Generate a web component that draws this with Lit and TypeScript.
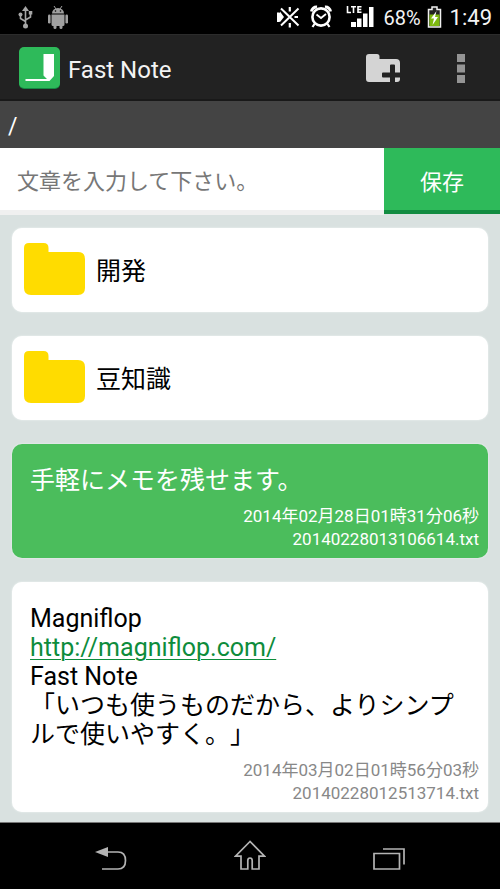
import { LitElement, html, svg, css } from "lit";
import { customElement, state } from "lit/decorators.js";

interface Note {
  lines: string[];
  saved: string;
  file: string;
  highlighted?: boolean;
}

const FOLDERS = ["開発", "豆知識"];

const NOTES: Note[] = [
  {
    lines: ["手軽にメモを残せます。"],
    saved: "2014年02月28日01時31分06秒",
    file: "20140228013106614.txt",
    highlighted: true,
  },
  {
    lines: [
      "Magniflop",
      "http://magniflop.com/",
      "Fast Note",
      "「いつも使うものだから、よりシンプルで使いやすく。」",
    ],
    saved: "2014年03月02日01時56分03秒",
    file: "20140228012513714.txt",
  },
];

@customElement("status-bar")
class StatusBar extends LitElement {
  static styles = css`
    :host {
      display: flex;
      align-items: center;
      height: 34px;
      padding: 0 8px 0 17px;
      background: #000;
      color: #f4f4f4;
    }
    svg {
      display: block;
      flex: none;
    }
    .left,
    .right {
      display: flex;
      align-items: center;
    }
    .left {
      gap: 14px;
      flex: 1;
    }
    .right {
      gap: 6px;
    }
    .alarm {
      margin: 0 8px 0 4px;
    }
    .percent {
      font-size: 20px;
      line-height: 24px;
      padding-top: 2px;
      margin-left: 2px;
    }
    .clock {
      font-size: 22px;
      line-height: 24px;
      padding-top: 2px;
      margin-left: 2px;
    }
  `;

  render() {
    return html`
      <div class="left">
        <svg width="16" height="24" viewBox="0 0 16 24" fill="none" stroke="#a6a6a6" stroke-width="2">
          <path d="M8.5 3v18M3.500 10v3.500l5 3M13.500 8v4l-5 3" stroke-width="1.600" />
          <path d="M8.500 1l3.500 5h-7z" fill="#a6a6a6" stroke="none" />
          <circle cx="8.500" cy="21" r="2.500" fill="#a6a6a6" stroke="none" />
          <circle cx="3.500" cy="9.500" r="2" fill="#a6a6a6" stroke="none" />
          <path d="M11.800 6h3.500v3.500h-3.500z" fill="#a6a6a6" stroke="none" />
        </svg>
        <svg width="22" height="24" viewBox="0 0 22 24" fill="#a0a0a0">
          <path d="M5 8.500a6 5.500 0 0 1 12 0zM4.500 9.500h13v10q0 1.500-1.500 1.500h-10q-1.500 0-1.500-1.500z" />
          <rect x="1" y="9.500" width="2.600" height="9" rx="1.300" />
          <rect x="18.400" y="9.500" width="2.600" height="9" rx="1.300" />
          <rect x="6.500" y="18" width="3" height="6" rx="1.500" />
          <rect x="12.500" y="18" width="3" height="6" rx="1.500" />
          <path d="M7 1l2 3M15 1l-2 3" stroke="#a0a0a0" />
          <circle cx="8.500" cy="6" r=".8" fill="#000" />
          <circle cx="13.500" cy="6" r=".8" fill="#000" />
        </svg>
      </div>
      <div class="right">
        <svg width="24" height="22" viewBox="0 0 24 22" fill="#fff">
          <path d="M1 6.500h2.500L8 11l-4.500 5H1zM4 5.500l4 5.500-4 5z" />
          <path d="M5 2.500L22.500 19.500M22.500 2.500L5 19.500" stroke="#fff" stroke-width="2" />
          <path d="M13.800 1v4.500M13.800 17v4.500M18.500 11h3.500" stroke="#fff" stroke-width="2.200" />
        </svg>
        <svg class="alarm" width="22" height="24" viewBox="0 0 22 24" fill="none" stroke="#fff">
          <circle cx="11" cy="12" r="8.600" stroke-width="2.600" />
          <path d="M1.500 6.500A5 5 0 0 1 7 2M20.500 6.500A5 5 0 0 0 15 2" stroke-width="3" />
          <path d="M6.500 9.500L11 13l5-4" stroke-width="1.800" />
          <path d="M4.500 19l-2 3M17.500 19l2 3" stroke-width="2.200" />
        </svg>
        <svg width="29" height="24" viewBox="0 0 29 24" fill="#fff">
          <path d="M5 17h5v5H5zM11 13.500h4.500V22H11zM17 8.500h4.500V22H17zM23 2h4.500v20H23z" />
          <path d="M1.500 1v6.500h3.500M5 1.800h5M7.500 1.800V8M15.500 1.800h-3.500v5.500h3.500M12 4.500h3.300" fill="none" stroke="#fff" stroke-width="1.600" />
        </svg>
        <span class="percent">68%</span>
        <svg width="15" height="24" viewBox="0 0 15 24">
          <path d="M5 2h5v2.500h3.500v17.500h-12V4.500H5z" fill="#222" stroke="#f0f0f0" stroke-width="1.500" />
          <path d="M2.500 9.500h10V21h-10z" fill="#7db80f" />
          <path d="M9.500 6L4 13.500h3L5.500 20 11 12H8z" fill="#fff" />
        </svg>
        <span class="clock">1:49</span>
      </div>
    `;
  }
}

@customElement("note-card")
class NoteCard extends LitElement {
  static properties = { note: { attribute: false } };
  declare note: Note;

  static styles = css`
    :host {
      display: block;
    }
    .card {
      padding: 22px 9px 7px 18px;
      border-radius: 10px;
      background: #fff;
      box-shadow: 0 0 2px #f4f8f7;
      color: #000;
    }
    .highlighted {
      background: #4bbd5c;
      color: #fff;
    }
    p {
      margin: 0;
      padding-right: 9px;
      font-size: 25px;
      line-height: 29px;
      text-spacing-trim: space-all;
    }
    a {
      color: #0d8c3c;
      text-decoration-thickness: 1px;
      text-underline-offset: 3px;
    }
    .meta {
      margin-top: 10px;
      font-size: 17px;
      line-height: 23px;
      text-align: right;
      color: #888;
    }
    .highlighted .meta {
      color: #fff;
    }
  `;

  render() {
    const { lines, saved, file, highlighted } = this.note;
    return html`
      <article class="card ${highlighted ? "highlighted" : ""}">
        ${lines.map(
          (line) =>
            html`<p>${line.startsWith("http") ? html`<a href=${line}>${line}</a>` : line}</p>`
        )}
        <div class="meta">
          <div>${saved}</div>
          <div>${file}</div>
        </div>
      </article>
    `;
  }
}

@customElement("app-root")
class AppRoot extends LitElement {
  @state() private draft = "";

  static styles = css`
    :host {
      display: flex;
      flex-direction: column;
      min-height: 100vh;
      background: #d9e1e0;
      font-family: Roboto, "Noto Sans CJK JP", sans-serif;
    }
    * {
      box-sizing: border-box;
    }
    svg {
      display: block;
      flex: none;
    }
    button {
      margin: 0;
      padding: 0;
      border: 0;
      background: none;
      font: inherit;
      color: inherit;
    }
    .bar {
      display: flex;
      align-items: center;
      height: 67px;
      padding: 2px 20px 0 19px;
      background: #222;
      border-top: 1px solid #2c2c2c;
      border-bottom: 2px solid #191919;
      color: #f3f3f3;
    }
    h1 {
      flex: 1;
      margin: 0 0 0 8px;
      padding-top: 3px;
      font-size: 24px;
      line-height: 30px;
      font-weight: 400;
    }
    .action {
      display: grid;
      place-items: center;
      width: 38px;
      height: 48px;
    }
    .action + .action {
      margin-left: 40px;
    }
    .path {
      height: 47px;
      padding: 0 8px;
      background: #444;
      color: #fff;
      font-size: 23px;
      line-height: 52px;
    }
    form {
      display: grid;
      grid-template-columns: minmax(0, 1fr) 116px;
      height: 67px;
      font-size: 22px;
    }
    input {
      min-width: 0;
      border: 0;
      border-bottom: 5px solid #f0f0f0;
      border-radius: 0;
      padding: 4px 17px 0;
      outline: 0;
      background: #fff;
      font: inherit;
      color: #000;
    }
    input::placeholder {
      color: #777;
      opacity: 1;
    }
    .save {
      padding-top: 2px;
      border-bottom: 4px solid #128c41;
      margin-bottom: 1px;
      background: #2eba5a;
      color: #fff;
    }
    .list {
      flex: 1;
      display: flex;
      flex-direction: column;
      gap: 24px;
      margin: 0;
      padding: 13px 12px 10px;
      list-style: none;
    }
    .folder {
      display: flex;
      align-items: center;
      gap: 11px;
      width: 100%;
      height: 84px;
      padding: 0 12px 2px;
      border-radius: 10px;
      background: #fff;
      box-shadow: 0 0 2px #f4f8f7;
      font-size: 25px;
      color: #000;
      text-align: left;
    }
    nav {
      display: grid;
      grid-template-columns: repeat(3, 1fr);
      height: 67px;
      padding: 0 42px;
      background: #000;
      border-top: 1px solid #777;
    }
    nav button {
      display: grid;
      place-items: center;
    }
  `;

  private navIcons = [
    {
      label: "戻る",
      art: svg`<path d="M10 12h13q7.500 0 7.500 8.500T23 29H7" /><path d="M0 12l13-5v10z" fill="#b4b4b4" stroke="none" />`,
    },
    {
      label: "ホーム",
      art: svg`<path d="M16 1.500L1.500 16.200H7V29h6.800v-8.500q0-2.500 2.200-2.500t2.200 2.500V29H25V16.200h5.500z" />`,
    },
    {
      label: "最近使ったアプリ",
      art: svg`<path d="M1 13.500h25.500V29H1zM10 9h21v15.500" />`,
    },
  ];

  render() {
    return html`
      <status-bar></status-bar>
      <header class="bar">
        <svg width="41" height="42" viewBox="0 0 41 42">
          <rect y="1" width="41" height="41" rx="5" fill="#158a43" />
          <rect width="41" height="41" rx="5" fill="#2eba5a" />
          <path d="M24.500 7H35v22l-4.500 5H6.500v-2H28l-3.500-3.500z" fill="#fff" />
        </svg>
        <h1>Fast Note</h1>
        <button class="action" aria-label="フォルダを作成">
          <svg width="36" height="30" viewBox="0 0 36 30">
            <path d="M4 1h8q2.500 0 2.500 2.500V6H31q4 0 4 4v16q0 3-3 3H4q-3 0-3-3V4q0-3 3-3z" fill="#d4d4d4" />
            <path d="M25 17.500v-5q0-1 1-1h3q1 0 1 1v7h5v5h-5v5h-5v-5h-7q-1 0-1-1v-3q0-1 1-1h7z" fill="#222" />
          </svg>
        </button>
        <button class="action" aria-label="メニュー">
          <svg width="8" height="29" viewBox="0 0 8 29" fill="#949494">
            <path d="M0 0h8v8H0zM0 10.500h8v8H0zM0 21h8v8H0z" />
          </svg>
        </button>
      </header>
      <div class="path">/</div>
      <form @submit=${(e: Event) => e.preventDefault()}>
        <input
          type="text"
          aria-label="文章"
          placeholder="文章を入力して下さい。"
          .value=${this.draft}
          @input=${(e: Event) => (this.draft = (e.target as HTMLInputElement).value)}
        />
        <button class="save" type="submit">保存</button>
      </form>
      <ul class="list">
        ${FOLDERS.map(
          (name) => html`<li>
            <button class="folder">
              <svg width="61" height="52" viewBox="0 0 61 52" fill="#ffdc00">
                <path d="M5 0h14.500q5 0 5 5v4H54q7 0 7 7v29q0 7-7 7H7q-7 0-7-7V5q0-5 5-5z" />
              </svg>
              <span>${name}</span>
            </button>
          </li>`
        )}
        ${NOTES.map((note) => html`<li><note-card .note=${note}></note-card></li>`)}
      </ul>
      <nav>
        ${this.navIcons.map(
          ({ label, art }) => html`<button aria-label=${label}>
            <svg width="32" height="32" viewBox="0 0 32 32" fill="none" stroke="#b4b4b4" stroke-width="1.700">
              ${art}
            </svg>
          </button>`
        )}
      </nav>
    `;
  }
}
